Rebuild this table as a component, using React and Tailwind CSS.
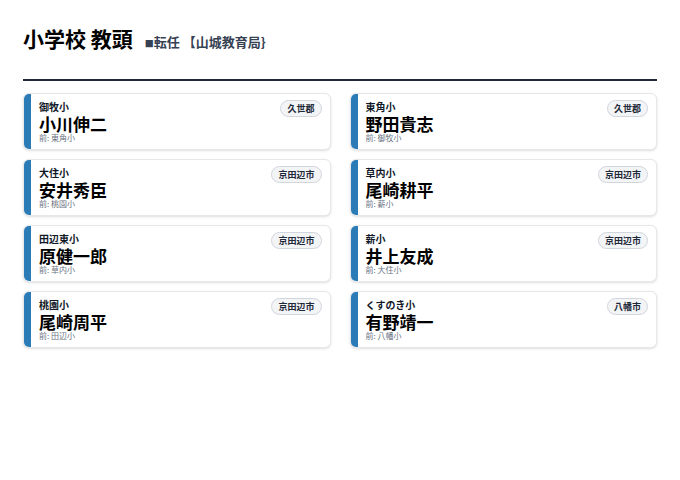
import React from "react";

const transfers = [
  { school: "御牧小", name: "小川伸二", prev: "東角小", area: "久世郡" },
  { school: "東角小", name: "野田貴志", prev: "御牧小", area: "久世郡" },
  { school: "大住小", name: "安井秀臣", prev: "桃園小", area: "京田辺市" },
  { school: "草内小", name: "尾崎耕平", prev: "薪小", area: "京田辺市" },
  { school: "田辺東小", name: "原健一郎", prev: "草内小", area: "京田辺市" },
  { school: "薪小", name: "井上友成", prev: "大住小", area: "京田辺市" },
  { school: "桃園小", name: "尾崎周平", prev: "田辺小", area: "京田辺市" },
  { school: "くすのき小", name: "有野靖一", prev: "八幡小", area: "八幡市" },
];

const Card = ({ item }) => (
  <div className="flex h-[57px] overflow-hidden rounded-md border border-gray-200 bg-white shadow-sm">
    <div className="w-[7px] shrink-0 bg-[#2b7bb6]" />
    <div className="flex flex-1 items-start justify-between pl-[8px] pr-[8px] pt-[6px]">
      <div className="flex flex-col">
        <span className="text-[10px] font-bold leading-[14px] text-gray-900">{item.school}</span>
        <span className="text-[17px] font-bold leading-[19px] text-black">{item.name}</span>
        <span className="text-[8px] leading-[10px] text-gray-500">前: {item.prev}</span>
      </div>
      <span className="rounded-full border border-gray-300 bg-gray-100 px-[6px] py-[2px] text-[9px] font-bold leading-[11px] text-gray-800">
        {item.area}
      </span>
    </div>
  </div>
);

export default function App() {
  return (
    <div
      className="min-h-[480px] w-[680px] bg-white px-[23px] pt-[24px]"
      style={{ fontFamily: '"Noto Sans CJK JP", "Noto Sans", sans-serif' }}
    >
      <div className="flex items-baseline">
        <h1 className="text-[21px] font-bold leading-[28px] text-black">小学校 教頭</h1>
        <span className="ml-[12px] text-[13px] font-bold text-gray-700">
          <span className="text-[9px]">■</span>転任 【山城教育局}
        </span>
      </div>
      <div className="mt-[27px] border-b-2 border-gray-800" />
      <div className="mt-[12px] grid grid-cols-2 gap-x-[19px] gap-y-[9px]">
        {transfers.map((item) => (
          <Card key={item.name} item={item} />
        ))}
      </div>
    </div>
  );
}
